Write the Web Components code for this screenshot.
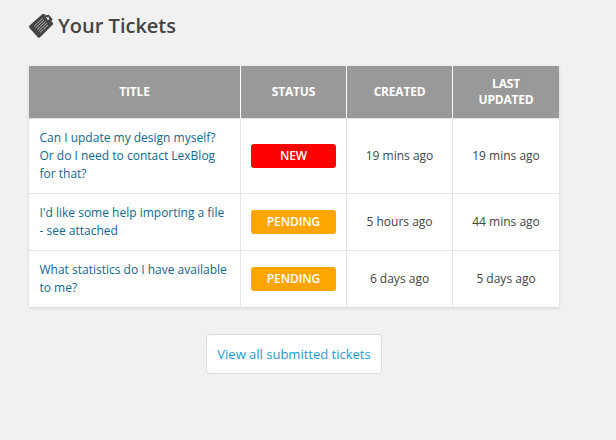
<!DOCTYPE html>
<html>
<head>
<meta charset="utf-8">
<style>
  html, body { margin: 0; background: #f1f1f1; }
  body { font-family: "Open Sans", sans-serif; color: #444; }
  main { display: flex; flex-direction: column; align-items: flex-start; padding: 12px 0 0 29px; }
</style>
</head>
<body>
<main>
  <page-heading>Your Tickets</page-heading>
  <ticket-table>
    <ticket-row status="new" created="19 mins ago" updated="19 mins ago">Can I update my design myself? Or do I need to contact LexBlog for that?</ticket-row>
    <ticket-row status="pending" created="5 hours ago" updated="44 mins ago">I'd like some help importing a file - see attached</ticket-row>
    <ticket-row status="pending" created="6 days ago" updated="5 days ago">What statistics do I have available to me?</ticket-row>
  </ticket-table>
  <view-all>View all submitted tickets</view-all>
</main>

<script>
class PageHeading extends HTMLElement {
  constructor() {
    super();
    this.attachShadow({ mode: 'open' });
    this.shadowRoot.innerHTML = `
      <style>
        :host { display: flex; align-items: center; gap: 4px; height: 27px; margin-bottom: 27px; }
        svg { display: block; flex: none; margin-left: -1px; }
        h1 { margin: 0; font: 600 20px/27px "Open Sans", sans-serif; color: #444; }
      </style>
      <svg width="26" height="26" viewBox="0 0 26 26" aria-hidden="true">
        <path d="M1.5 12.5 L14.5 1 Q15.5 0.4 16.5 1.2 L18 2.6 L20.5 1.6 L24.6 6 L23.4 8.2 L25 10 Q25.4 11 24.6 11.8 L11.8 24.6 Q11 25.4 10 24.6 L1.5 15 Q0.6 13.6 1.5 12.5 Z" fill="#444"/>
        <g stroke="#b4b4b4" stroke-width="1">
          <path d="M6 13.5 L14.5 5.5"/>
          <path d="M7.5 15 L16 7"/>
          <path d="M9 16.5 L17.5 8.5"/>
          <path d="M10.5 18 L19 10"/>
          <path d="M12 19.5 L20 12"/>
        </g>
        <path d="M18 4.5 L20.5 3.8 L21.5 6.5 L19.6 7 Z" fill="#d8d8d8"/>
      </svg>
      <h1><slot></slot></h1>
    `;
  }
}

// same four columns for the header and the rows
const COLUMNS = 'grid-template-columns: 212px 106px 106px 106px;';

class TicketTable extends HTMLElement {
  constructor() {
    super();
    this.attachShadow({ mode: 'open' });
    this.shadowRoot.innerHTML = `
      <style>
        :host { display: block; width: 530px; background: #fff; box-shadow: 0 1px 3px rgba(0, 0, 0, 0.14); }
        .head {
          display: grid; ${COLUMNS}
          height: 52px;
          background: #999;
          border-bottom: 1px solid #e4e4e4;
        }
        .head div {
          display: flex; align-items: center; justify-content: center;
          text-align: center;
          font: 700 12px/16px "Open Sans", sans-serif;
          letter-spacing: -0.2px;
          text-transform: uppercase;
          color: #fff;
          border-right: 1px solid #fff;
        }
        .head div:last-child { border-right: 0; }
      </style>
      <div class="head">
        <div>Title</div>
        <div>Status</div>
        <div>Created</div>
        <div>Last<br>Updated</div>
      </div>
      <slot></slot>
    `;
  }
}

class TicketRow extends HTMLElement {
  constructor() {
    super();
    this.attachShadow({ mode: 'open' });
  }

  connectedCallback() {
    const status = this.getAttribute('status') || 'new';
    this.shadowRoot.innerHTML = `
      <style>
        :host { display: grid; ${COLUMNS} border-bottom: 1px solid #e4e4e4; }
        :host(:last-child) { border-bottom: 0; }
        .cell {
          display: flex; align-items: center; justify-content: center;
          border-right: 1px solid #e4e4e4;
          font: 400 12px/18px "Open Sans", sans-serif;
          color: #444;
        }
        .cell:last-child { border-right: 0; }
        .title {
          justify-content: flex-start;
          padding: 10px 11px 10px 10.5px;
          color: #10678f;
        }
        .badge {
          width: 85px; height: 24px;
          display: flex; align-items: center; justify-content: center;
          border-radius: 3px;
          font: 600 12px/24px "Open Sans", sans-serif;
          letter-spacing: -0.1px;
          text-transform: uppercase;
          color: #fff;
        }
        .badge.new { background: #f00; }
        .badge.pending { background: #ffa500; }
      </style>
      <div class="cell title"><span><slot></slot></span></div>
      <div class="cell"><span class="badge ${status}">${status}</span></div>
      <div class="cell">${this.getAttribute('created')}</div>
      <div class="cell">${this.getAttribute('updated')}</div>
    `;
  }
}

class ViewAll extends HTMLElement {
  constructor() {
    super();
    this.attachShadow({ mode: 'open' });
    this.shadowRoot.innerHTML = `
      <style>
        :host { display: block; width: 530px; margin-top: 27px; text-align: center; }
        a {
          display: inline-block;
          padding: 10px;
          font: 400 13px/18px "Open Sans", sans-serif;
          color: #1b9ad6;
          background: #fff;
          border: 1px solid #dcdcdc;
          border-radius: 4px;
          text-decoration: none;
        }
      </style>
      <a href="#"><slot></slot></a>
    `;
  }
}

customElements.define('page-heading', PageHeading);
customElements.define('ticket-table', TicketTable);
customElements.define('ticket-row', TicketRow);
customElements.define('view-all', ViewAll);
</script>
</body>
</html>
